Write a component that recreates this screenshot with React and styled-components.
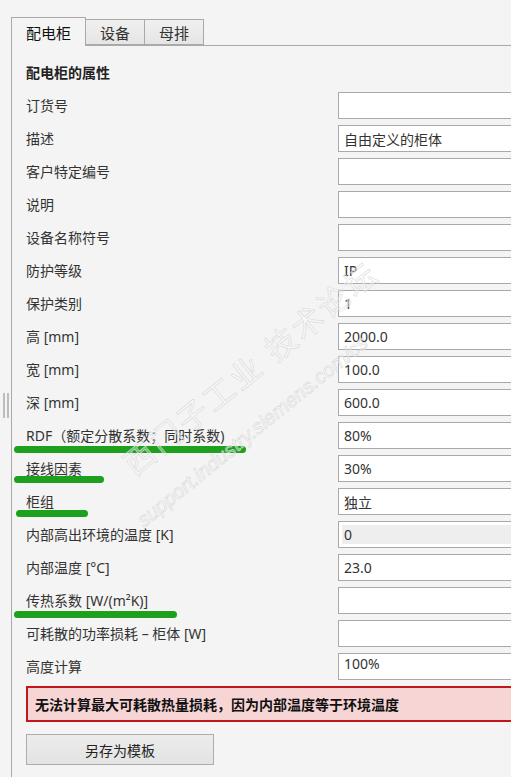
import React from "react"
import styled, { createGlobalStyle } from "styled-components"

const GlobalStyle = createGlobalStyle`
  html, body {
    margin: 0;
    padding: 0;
    background: #f4f4f4;
    overflow: hidden;
  }
  body {
    font-family: "Noto Sans", "Noto Sans CJK SC", sans-serif;
    font-size: 14px;
    color: #2b2b2b;
  }
`

const Page = styled.div`
  position: relative;
  display: flex;
  min-height: 100vh;
  padding-top: 17px;
  box-sizing: border-box;
  overflow: hidden;
`

const Gutter = styled.div`
  width: 11px;
  flex: none;
`

const Grip = styled.div`
  position: absolute;
  left: 3px;
  top: 393px;
  width: 6px;
  height: 25px;
  border-left: 2px solid #bdbdbd;
  border-right: 2px solid #bdbdbd;
  box-sizing: border-box;
`

const Main = styled.div`
  flex: 1;
  display: flex;
  flex-direction: column;
  min-width: 0;
`

const TabBar = styled.div`
  display: flex;
  align-items: flex-end;
  height: 28px;
`

const Tab = styled.div`
  box-sizing: border-box;
  display: flex;
  align-items: center;
  justify-content: center;
  width: ${(p) => p.$w}px;
  height: ${(p) => (p.$active ? 29 : 26)}px;
  margin-bottom: ${(p) => (p.$active ? -1 : 0)}px;
  border: 1px solid #a9a9a9;
  border-left-width: ${(p) => (p.$first ? 1 : 0)}px;
  border-bottom: ${(p) => (p.$active ? "none" : "1px solid #a9a9a9")};
  background: ${(p) =>
    p.$active ? "#f4f4f4" : "linear-gradient(#f0f0f0, #e5e5e5)"};
  color: ${(p) => (p.$active ? "#111" : "#333")};
  font-size: 15px;
  position: relative;
  z-index: ${(p) => (p.$active ? 1 : 0)};
`

const Panel = styled.div`
  flex: 1;
  border-left: 1px solid #a9a9a9;
  border-top: 1px solid #a9a9a9;
  padding: 17px 0 0 14px;
`

const Heading = styled.div`
  font-weight: bold;
  line-height: 20px;
  color: #222;
  margin-bottom: 9px;
`

const Rows = styled.div`
  display: flex;
  flex-direction: column;
  gap: 6px;
`

const Row = styled.div`
  display: flex;
  align-items: center;
  height: 27px;
`

const Label = styled.div`
  position: relative;
  width: 312px;
  flex: none;
  white-space: nowrap;
  color: #333;
  line-height: 20px;
`

const Mark = styled.span`
  position: absolute;
  left: ${(p) => p.$x}px;
  top: ${(p) => p.$dy}px;
  width: ${(p) => p.$w}px;
  height: 7px;
  border-radius: 4px;
  background: #1da01d;
`

const Field = styled.div`
  box-sizing: border-box;
  width: 220px;
  height: 27px;
  flex: none;
  border: 1px solid #a9a9a9;
  background: #fff;
  padding: ${(p) => (p.$disabled ? "3px" : "0")};
  display: flex;
`

const FieldInner = styled.div`
  flex: 1;
  display: flex;
  align-items: ${(p) => (p.$top ? "flex-start" : "center")};
  padding-left: ${(p) => (p.$disabled ? 2 : 5)}px;
  background: ${(p) => (p.$disabled ? "#eeeeee" : "transparent")};
  color: #333;
  line-height: ${(p) => (p.$top ? "20px" : "normal")};
`

const ErrorBox = styled.div`
  box-sizing: border-box;
  margin-top: 6px;
  width: 500px;
  height: 36px;
  border: 2px solid #c3161c;
  background: #f7d5d5;
  display: flex;
  align-items: center;
  padding-left: 7px;
  font-weight: bold;
  color: #111;
  white-space: nowrap;
`

const Button = styled.div`
  box-sizing: border-box;
  margin-top: 12px;
  width: 188px;
  height: 31px;
  border: 1px solid #adadad;
  background: linear-gradient(#ececec, #e3e3e3);
  display: flex;
  align-items: center;
  justify-content: center;
  color: #222;
`

const Watermark = styled.div`
  position: absolute;
  left: ${(p) => p.$x}px;
  top: ${(p) => p.$y}px;
  line-height: 1;
  transform-origin: left bottom;
  transform: rotate(-39deg);
  white-space: nowrap;
  font-size: ${(p) => p.$size}px;
  font-style: ${(p) => (p.$italic ? "italic" : "normal")};
  font-family: "Liberation Sans", "Noto Sans CJK SC", sans-serif;
  color: rgba(255, 255, 255, 0.35);
  -webkit-text-stroke: 0.6px #dadada;
  letter-spacing: ${(p) => p.$ls}px;
  pointer-events: none;
`

const rows = [
  { label: "订货号", value: "" },
  { label: "描述", value: "自由定义的柜体" },
  { label: "客户特定编号", value: "" },
  { label: "说明", value: "" },
  { label: "设备名称符号", value: "" },
  { label: "防护等级", value: "IP" },
  { label: "保护类别", value: "1" },
  { label: "高 [mm]", value: "2000.0" },
  { label: "宽 [mm]", value: "100.0" },
  { label: "深 [mm]", value: "600.0" },
  {
    label: "RDF（额定分散系数；同时系数)",
    value: "80%",
    mark: { x: -12, dy: 20, w: 232 },
  },
  { label: "接线因素", value: "30%", mark: { x: -12, dy: 17, w: 90 } },
  { label: "柜组", value: "独立", mark: { x: -10, dy: 18, w: 72 } },
  { label: "内部高出环境的温度 [K]", value: "0", disabled: true },
  { label: "内部温度 [°C]", value: "23.0" },
  {
    label: "传热系数 [W/(m²K)]",
    value: "",
    mark: { x: -12, dy: 20, w: 163 },
  },
  { label: "可耗散的功率损耗 – 柜体 [W]", value: "" },
  { label: "高度计算", value: "100%", top: true },
]

function App() {
  return (
    <>
      <GlobalStyle />
      <Page>
        <Gutter />
        <Grip />
        <Main>
          <TabBar>
            <Tab $w={75} $first $active>
              配电柜
            </Tab>
            <Tab $w={59}>设备</Tab>
            <Tab $w={59}>母排</Tab>
          </TabBar>
          <Panel>
            <Heading>配电柜的属性</Heading>
            <Rows>
              {rows.map((r) => (
                <Row key={r.label}>
                  <Label>
                    {r.label}
                    {r.mark && (
                      <Mark $x={r.mark.x} $dy={r.mark.dy} $w={r.mark.w} />
                    )}
                  </Label>
                  <Field $disabled={r.disabled}>
                    <FieldInner $disabled={r.disabled} $top={r.top}>
                      {r.value}
                    </FieldInner>
                  </Field>
                </Row>
              ))}
            </Rows>
            <ErrorBox>
              无法计算最大可耗散热量损耗，因为内部温度等于环境温度
            </ErrorBox>
            <Button>另存为模板</Button>
          </Panel>
        </Main>
        <Watermark $x={138} $y={450} $size={31} $ls={3}>
          西门子工业 技术论坛
        </Watermark>
        <Watermark $x={146} $y={510} $size={20} $ls={0} $italic>
          support.industry.siemens.com/cs
        </Watermark>
      </Page>
    </>
  )
}

export default App
